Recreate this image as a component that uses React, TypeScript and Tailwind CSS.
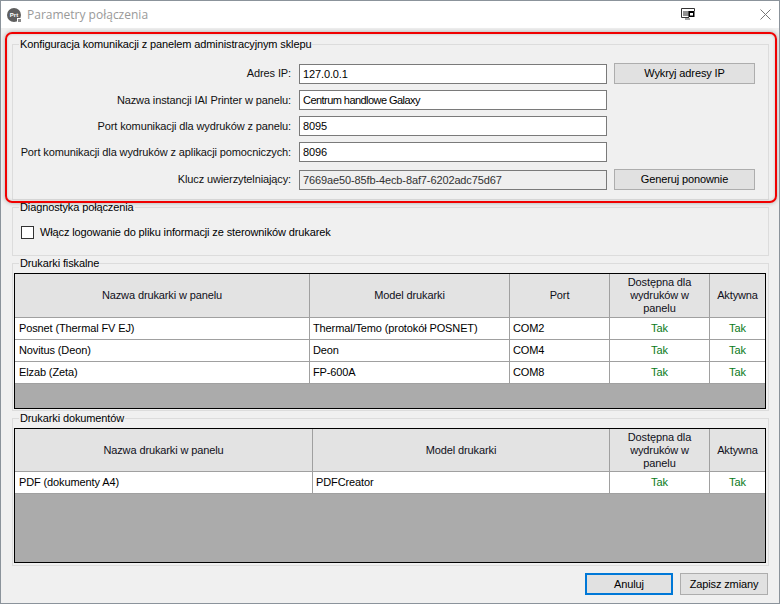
const font = { fontFamily: '"Liberation Sans", Arial, sans-serif' };

function Logo() {
  return (
    <div className="relative w-[14px] h-[14px] rounded-full bg-[#5f5f5f] flex items-center justify-center shrink-0">
      <span className="text-[6px] leading-none font-bold text-white">Prt</span>
      <span className="absolute right-[-1px] bottom-[-1px] w-[5px] h-[5px] bg-[#8a8a8a] border border-white" />
    </div>
  );
}

function PipIcon() {
  return (
    <svg width="14" height="13" viewBox="0 0 14 13" fill="none">
      <path d="M0.5 0.5H13.5V3M8 9.5H0.5V0.5" stroke="#333" />
      <path d="M3 3V8M5 3V8M7 3V8" stroke="#222" />
      <rect x="7.5" y="3" width="6" height="6" fill="#000" />
      <rect x="9" y="5" width="3" height="2.5" fill="#fff" />
      <path d="M4 11H9" stroke="#444" />
    </svg>
  );
}

function CloseIcon() {
  return (
    <svg width="11" height="11" viewBox="0 0 11 11" fill="none">
      <path d="M0.5 0.5L10.5 10.5M10.5 0.5L0.5 10.5" stroke="#777" />
    </svg>
  );
}

function Group({ title, className, children }: { title: string; className: string; children: React.ReactNode }) {
  return (
    <fieldset className={`border border-[#dcdcdc] mx-0 w-[757px] ${className}`}>
      <legend className="ml-[6px] px-px h-[14px] leading-[14px] text-black whitespace-nowrap">{title}</legend>
      {children}
    </fieldset>
  );
}

function Field({ label, value, disabled, tight }: { label: string; value: string; disabled?: boolean; tight?: boolean }) {
  return (
    <>
      <span className="w-[278px] text-right text-[#111] shrink-0 self-center whitespace-nowrap">{label}</span>
      <input
        readOnly
        value={value}
        className={`ml-[8px] w-[308px] h-[20px] border border-[#7a7a7a] pl-[3px] outline-none ${tight ? "tracking-[-0.55px]" : ""} ${disabled ? "bg-[#efefef] text-[#333]" : "bg-white text-black"}`}
      />
    </>
  );
}

function WinButton({ children, className }: { children: React.ReactNode; className: string }) {
  return (
    <button className={`bg-[#e1e1e1] text-black flex items-center justify-center ${className}`}>{children}</button>
  );
}

type Row = string[];

function PrinterTable({ widths, heads, rows, headH, height }: { widths: number[]; heads: string[]; rows: Row[]; headH: string; height: string }) {
  return (
    <div className={`ml-px w-[752px] border border-black bg-[#ababab] ${height}`}>
      <table className="table-fixed border-separate border-spacing-0 w-[750px]">
        <colgroup>
          {widths.map((w, i) => (
            <col key={i} style={{ width: w }} />
          ))}
        </colgroup>
        <thead>
          <tr className={headH}>
            {heads.map((h, i) => (
              <th
                key={i}
                className={`bg-[#e3e3e3] font-normal text-[#101020] text-center leading-[13px] border-b border-[#a0a0a0] ${h.length > 25 ? "px-[12px]" : "px-[2px]"} ${i < heads.length - 1 ? "border-r" : ""}`}
              >
                {h}
              </th>
            ))}
          </tr>
        </thead>
        <tbody>
          {rows.map((r, ri) => (
            <tr key={ri} className="h-[22px]">
              {r.map((c, i) => (
                <td
                  key={i}
                  className={`bg-white border-b border-[#a0a0a0] p-0 ${i < r.length - 1 ? "border-r" : ""} ${c === "Tak" ? "text-center text-[#0a7a20]" : i === 0 ? "pl-[4px] text-black" : "pl-[3px] text-black"}`}
                >
                  {c}
                </td>
              ))}
            </tr>
          ))}
        </tbody>
      </table>
    </div>
  );
}

export default function App() {
  return (
    <div className="relative w-[780px] h-[604px] bg-[#f0f0f0] border border-[#8b939b] text-[11px] tracking-[-0.12px] overflow-hidden" style={font}>
      <div className="h-[27px] bg-white flex items-center pl-[6px] pr-[8px] tracking-normal">
        <Logo />
        <span className="ml-[6px] text-[12px] text-[#999]" style={{ fontFamily: '"Open Sans", sans-serif' }}>
          Parametry połączenia
        </span>
        <div className="ml-auto mr-[65px]"><PipIcon /></div>
        <CloseIcon />
      </div>

      <div className="pt-[9px] pl-[11px]">
        <Group title="Konfiguracja komunikacji z panelem administracyjnym sklepu" className="h-[163px]">
          <div className="pt-[12px] flex flex-col">
            <div className="flex h-[21px] items-end">
              <Field label="Adres IP:" value="127.0.0.1" />
              <WinButton className="ml-[7px] w-[141px] h-[21px] border border-[#adadad]">Wykryj adresy IP</WinButton>
            </div>
            <div className="flex mt-[6px]">
              <Field label="Nazwa instancji IAI Printer w panelu:" value="Centrum handlowe Galaxy" tight />
            </div>
            <div className="flex mt-[6px]">
              <Field label="Port komunikacji dla wydruków z panelu:" value="8095" />
            </div>
            <div className="flex mt-[6px]">
              <Field label="Port komunikacji dla wydruków z aplikacji pomocniczych:" value="8096" />
            </div>
            <div className="flex h-[21px] items-end mt-[7px]">
              <Field label="Klucz uwierzytelniający:" value="7669ae50-85fb-4ecb-8af7-6202adc75d67" disabled />
              <WinButton className="ml-[7px] w-[141px] h-[21px] border border-[#adadad]">Generuj ponownie</WinButton>
            </div>
          </div>
        </Group>

        <Group title="Diagnostyka połączenia" className="h-[56px]">
          <div className="pl-[8px] pt-[10px] flex items-center">
            <span className="w-[13px] h-[13px] bg-white border border-[#333] shrink-0" />
            <span className="ml-[6px] text-black">Włącz logowanie do pliku informacji ze sterowników drukarek</span>
          </div>
        </Group>

        <Group title="Drukarki fiskalne" className="h-[155px]">
          <div className="pt-[3px]">
            <PrinterTable
              widths={[295, 200, 100, 100, 55]}
              heads={["Nazwa drukarki w panelu", "Model drukarki", "Port", "Dostępna dla wydruków w panelu", "Aktywna"]}
              rows={[
                ["Posnet (Thermal FV EJ)", "Thermal/Temo (protokół POSNET)", "COM2", "Tak", "Tak"],
                ["Novitus (Deon)", "Deon", "COM4", "Tak", "Tak"],
                ["Elzab (Zeta)", "FP-600A", "COM8", "Tak", "Tak"],
              ]}
              headH="h-[44px]"
              height="h-[136px]"
            />
          </div>
        </Group>

        <Group title="Drukarki dokumentów" className="h-[155px]">
          <div className="pt-[3px]">
            <PrinterTable
              widths={[298, 297, 100, 55]}
              heads={["Nazwa drukarki w panelu", "Model drukarki", "Dostępna dla wydruków w panelu", "Aktywna"]}
              rows={[["PDF (dokumenty A4)", "PDFCreator", "Tak", "Tak"]]}
              headH="h-[43px]"
              height="h-[135px]"
            />
          </div>
        </Group>

        <div className="flex justify-start pl-[573px] gap-[7px] mt-[7px]">
          <WinButton className="w-[88px] h-[22px] border-2 border-[#0078d7]">Anuluj</WinButton>
          <WinButton className="w-[88px] h-[22px] border border-[#adadad]">Zapisz zmiany</WinButton>
        </div>
      </div>

      <div className="absolute left-[4px] top-[31px] w-[772px] h-[171px] border-2 border-[#f00000] rounded-[7px] pointer-events-none shadow-[0_0_4px_rgba(0,0,0,0.3),inset_0_0_3px_rgba(0,0,0,0.2)]" />
    </div>
  );
}
